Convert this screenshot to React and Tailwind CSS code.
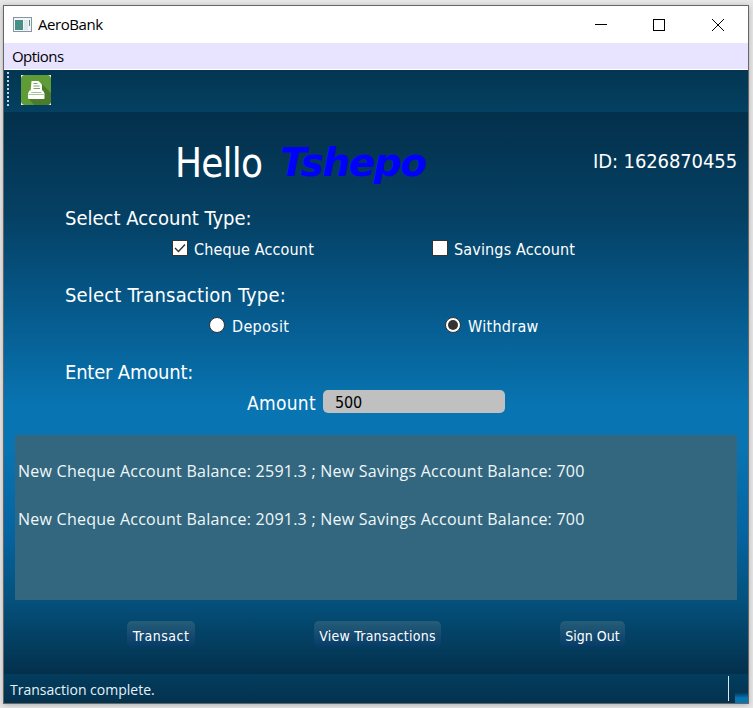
const tahoma = "font-['DejaVu_Sans_Condensed','DejaVu_Sans',sans-serif] [font-stretch:condensed]";
const segoe = "font-['Open_Sans','Noto_Sans',sans-serif] [font-stretch:normal]";

function Button({ children, className }) {
  return (
    <button
      className={`${tahoma} ${className} flex h-[26px] items-center justify-center whitespace-nowrap rounded-[5px] bg-linear-to-b from-[#265d78] to-[#063b68] pt-[4px] text-[14px] text-white`}
    >
      {children}
    </button>
  );
}

function PrintIcon() {
  return (
    <svg className="h-[30px] w-[30px]" viewBox="0 0 30 30">
      <rect width="30" height="30" fill="#fff" />
      <rect width="30" height="30" rx="4" fill="#5f9c35" />
      <path d="M20 8L30 18V26a4 4 0 0 1-4 4H13L7 23z" fill="#4a7c2b" />
      <path d="M10.500 6h7l3.500 3.500V17H9.500z" fill="#fff" />
      <path d="M12.500 8.500h4M12.500 11h6M12.500 13.500h6.500" stroke="#6d9b51" strokeWidth="0.9" />
      <path d="M8.500 15.500h1.500v2h10.500v-2H22l1.500 3v4.500a1 1 0 0 1-1 1H8a1 1 0 0 1-1-1v-4.500z" fill="#fff" />
      <path d="M7.500 19.500h15.500" stroke="#8bad77" strokeWidth="0.7" />
    </svg>
  );
}

export default function App() {
  return (
    <div className="h-[708px] w-[753px] overflow-hidden bg-[#e8e8e8] pl-[3px] pt-[5px]">
      <div className="flex h-[699px] w-[746px] flex-col border border-[#666] bg-[#033a59] shadow-[0_1px_6px_rgba(0,0,0,0.25)]">
        <header className="flex h-[37px] shrink-0 items-center bg-white pl-[9px]">
          <svg className="h-[16px] w-[19px]" viewBox="0 0 19 16">
            <rect x="0.500" y="0.500" width="18" height="14" fill="#f3f5f7" stroke="#8595a2" />
            <rect x="2" y="3" width="8" height="10" fill="#488f88" />
            <rect x="11" y="3" width="4" height="10" fill="#e0e7ea" />
            <rect x="16" y="3" width="1" height="6" fill="#499185" />
          </svg>
          <span className={`${segoe} ml-[6px] text-[15px] tracking-[-0.45px] text-black`}>AeroBank</span>
          <svg className="ml-auto mr-[23px] h-[14px] w-[130px]" viewBox="0 0 130 14" fill="none" stroke="#000">
            <path d="M0 6.500h12" />
            <rect x="58.500" y="1.500" width="11" height="11" />
            <path d="M117 1l12 12M129 1L117 13" />
          </svg>
        </header>
        <nav className={`${segoe} flex h-[27px] shrink-0 items-center border-b border-white bg-[#e8e3fe] pl-[8px] text-[15px] tracking-[-0.55px] text-black`}>
          Options
        </nav>
        <div className="flex h-[42px] shrink-0 items-start bg-linear-to-b from-[#033652] to-[#044061] pl-[3px] pt-[2px]">
          <div className="h-[35px] w-[2px] bg-[repeating-linear-gradient(to_bottom,#c4d3dc_0px,#c4d3dc_2px,transparent_2px,transparent_4px)]" />
          <div className="ml-[12px] mt-[3px]">
            <PrintIcon />
          </div>
        </div>
        <main
          className={`${tahoma} flex h-[562px] shrink-0 flex-col bg-[linear-gradient(to_bottom,#03304b_0%,#054165_19%,#055382_31%,#07649b_42%,#0874b1_52%,#0874b1_60%,#0663a0_75%,#04517c_87%,#03304b_100%)] text-white`}
        >
          <div className="flex h-[94px] items-center pl-[171px] pr-[11px] pt-[7px]">
            <span className="w-[105px] text-[40px] tracking-[-0.8px]">Hello</span>
            <span className="mt-[2px] text-[39px] font-bold italic tracking-[-1.4px] text-[#0000ff] [font-family:'DejaVu_Sans',sans-serif] [font-stretch:normal]">
              Tshepo
            </span>
            <span className="ml-auto -mt-[3px] text-[20px] tracking-[-0.1px]">ID: 1626870455</span>
          </div>
          <h2 className="h-[30px] pl-[61px] text-[20px] leading-[24px]">Select Account Type:</h2>
          <div className="flex h-[47px] items-start text-[16px] leading-[28px] tracking-[0.15px]">
            <label className="ml-[168px] flex w-[260px] items-start">
              <svg className="mr-[6px] mt-[4px] h-[16px] w-[16px]" viewBox="0 0 16 16">
                <rect x="0.500" y="0.500" width="15" height="15" fill="#fff" stroke="#333" />
                <path d="M3 8l3.500 3.500L13 4.500" fill="none" stroke="#333" strokeWidth="1.400" />
              </svg>
              <span>Cheque Account</span>
            </label>
            <label className="flex items-start">
              <svg className="mr-[6px] mt-[4px] h-[16px] w-[16px]" viewBox="0 0 16 16">
                <rect x="0.500" y="0.500" width="15" height="15" fill="#fff" stroke="#333" />
              </svg>
              <span>Savings Account</span>
            </label>
          </div>
          <h2 className="h-[30px] pl-[61px] text-[20px] leading-[24px] tracking-[0.18px]">Select Transaction Type:</h2>
          <div className="flex h-[47px] items-start text-[16px] leading-[28px] tracking-[0.3px]">
            <label className="ml-[205px] flex w-[236px] items-start">
              <svg className="mr-[7px] mt-[4px] h-[16px] w-[16px]" viewBox="0 0 16 16">
                <circle cx="8" cy="8" r="7.500" fill="#fff" stroke="#333" />
              </svg>
              <span>Deposit</span>
            </label>
            <label className="flex items-start">
              <svg className="mr-[7px] mt-[4px] h-[16px] w-[16px]" viewBox="0 0 16 16">
                <circle cx="8" cy="8" r="7.500" fill="#fff" stroke="#333" />
                <circle cx="8" cy="8" r="5" fill="#333" />
              </svg>
              <span>Withdraw</span>
            </label>
          </div>
          <h2 className="h-[30px] pl-[61px] text-[20px] leading-[24px] tracking-[-0.2px]">Enter Amount:</h2>
          <div className="flex h-[45px] items-start pl-[243px]">
            <span className="w-[76px] whitespace-nowrap text-[19px] leading-[26px] tracking-[0.3px]">Amount</span>
            <div className="h-[23px] w-[182px] rounded-[5px] bg-[#c0c0c0] pl-[12px] text-[16px] leading-[25px] tracking-[-0.2px] text-black">
              500
            </div>
          </div>
          <div className={`${segoe} ml-[11px] h-[165px] w-[722px] bg-[#33677f] pl-[3px] pt-[24px] text-[16px] leading-[24px] tracking-[0.245px] text-[#f0f8fa]`}>
            <p className="whitespace-nowrap">New Cheque Account Balance: 2591.3 ; New Savings Account Balance: 700</p>
            <p className="mt-[24px] whitespace-nowrap">New Cheque Account Balance: 2091.3 ; New Savings Account Balance: 700</p>
          </div>
          <div className="mt-[21px] flex">
            <Button className="ml-[123px] w-[68px] tracking-[0.5px]">Transact</Button>
            <Button className="ml-[119px] w-[127px] tracking-[0.25px]">View Transactions</Button>
            <Button className="ml-[119px] w-[65px]">Sign Out</Button>
          </div>
        </main>
        <footer className={`${segoe} flex h-[29px] items-center bg-linear-to-b from-[#033d5e] to-[#03324e] pl-[6px] text-[14px] text-[#e5f2f8]`}>
          <span className="mt-[1px]">Transaction complete.</span>
          <div className="ml-auto h-[25px] w-px bg-[#dde7ee]" />
          <div className="ml-[6px] h-[10px] w-[13px] self-end bg-linear-to-b from-[#033d5e] via-[#0874b1] to-[#0874b1]" />
        </footer>
      </div>
    </div>
  );
}
